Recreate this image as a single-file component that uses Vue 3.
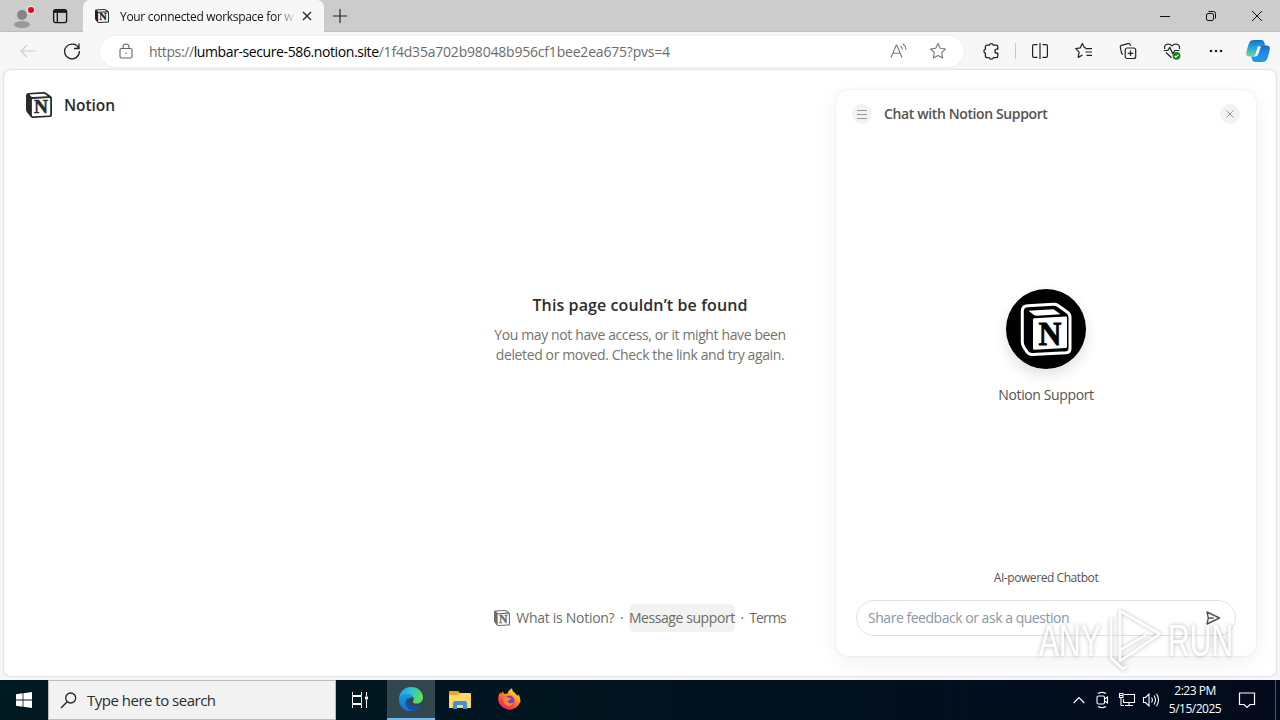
<template>
  <div class="desktop">
    <header class="tabstrip">
      <div class="avatar">
        <svg width="26" height="28" viewBox="0 0 26 28">
          <circle cx="13" cy="13" r="5" fill="#858585" />
          <ellipse cx="13" cy="22.500" rx="8" ry="3.600" fill="#999" />
          <circle cx="22" cy="8" r="4.500" fill="#dedede" />
          <circle cx="22" cy="8" r="3" fill="#e00b1c" />
        </svg>
      </div>
      <svg class="workspace" width="16" height="16" viewBox="0 0 16 16" fill="none" stroke="#111" stroke-width="1.300">
        <rect x="1.600" y="1.600" width="13" height="13" rx="2" />
        <path d="M1.800 3.500h12.600" stroke-width="2.600" />
        <path d="M5.300 4v10" />
      </svg>
      <div class="tab">
        <svg class="tab-icon" width="14" height="14" viewBox="0 0 26 26"><use href="#cube" /></svg>
        <span class="tab-title">Your connected workspace for w</span>
        <svg width="10" height="10" viewBox="0 0 10 10" stroke="#222" stroke-width="1.300"><path d="M1 1l8 8M9 1l-8 8" /></svg>
      </div>
      <svg class="plus" width="14" height="14" viewBox="0 0 14 14" stroke="#222" stroke-width="1.200"><path d="M7 0v14M0 7h14" /></svg>
      <div class="window-buttons">
        <svg width="12" height="12" viewBox="0 0 12 12" fill="none" stroke="#111"><path d="M1 6.500h10" /></svg>
        <svg width="12" height="12" viewBox="0 0 12 12" fill="none" stroke="#111"><rect x="1.500" y="3.500" width="7" height="7" rx="1.500" /><path d="M3.500 1.500h5q2 0 2 2v5" /></svg>
        <svg width="12" height="12" viewBox="0 0 12 12" fill="none" stroke="#111"><path d="M1 1l10 10M11 1L1 11" /></svg>
      </div>
    </header>

    <div class="toolbar">
      <svg class="back" width="16" height="14" viewBox="0 0 16 14" fill="none" stroke="#cfcfcf" stroke-width="1.200"><path d="M16 7H1M7 1L1 7l6 6" /></svg>
      <svg class="reload" width="18" height="18" viewBox="0 0 18 18" fill="none" stroke="#222" stroke-width="1.300"><path d="M15.800 6.500A7.400 7.400 0 1 0 16.400 9M16 1.500v5h-5" /></svg>
      <div class="address">
        <svg class="lock" width="14" height="16" viewBox="0 0 14 16" fill="none" stroke="#666" stroke-width="1.100">
          <rect x="1" y="5.500" width="12" height="9.500" rx="1.500" /><path d="M4 5.500V4a3 3 0 0 1 6 0v1.500" /><circle cx="7" cy="10.300" r=".8" fill="#666" stroke="none" />
        </svg>
        <span class="url"><span class="scheme">https://</span><b>lumbar-secure-586.notion.site</b><span class="path">/1f4d35a702b98048b956cf1bee2ea675?pvs=4</span></span>
        <svg class="read" width="18" height="18" viewBox="0 0 18 18" fill="none" stroke="#777" stroke-width="1.100"><path d="M1 15.500L6.300 3h.4L12 15.500M3 11.300h7M10.500 4q1.700 1.300 1.800 3.500M12.800 1.800q3 2.300 3.200 5.800" /></svg>
        <svg class="star" width="18" height="18" viewBox="0 0 18 18" fill="none" stroke="#777" stroke-width="1.100" stroke-linejoin="round"><path d="M9 1.500l2.300 4.800 5.200.7-3.800 3.700.9 5.200L9 13.400l-4.600 2.500.9-5.200L1.500 7l5.200-.7z" /></svg>
      </div>
      <div class="tool">
        <svg width="18" height="18" viewBox="0 0 18 18" fill="none" stroke="#222" stroke-width="1.300" stroke-linejoin="round"><path d="M5 3.200h2.200a2.200 2.200 0 0 1 4.200 0h2.800q1.600 0 1.600 1.600v2.400h-.9a2 2 0 0 0 0 4h.9v2.800q0 1.600-1.600 1.600h-2.800a2.200 2.200 0 0 1-4.200 0H5q-1.600 0-1.600-1.600v-2.800a2.100 2.100 0 0 1 0-4V4.800q0-1.600 1.600-1.600z" /></svg>
      </div>
      <i class="divider"></i>
      <div class="tool">
        <svg width="18" height="18" viewBox="0 0 18 18" fill="none" stroke="#222" stroke-width="1.200"><path d="M6.500 2.700H3q-1.400 0-1.400 1.400v9.800q0 1.400 1.400 1.400h3.500M11.500 2.700H15q1.400 0 1.400 1.400v9.800q0 1.400-1.400 1.400h-3.500M9 1v16" /></svg>
      </div>
      <div class="tool">
        <svg width="18" height="18" viewBox="0 0 18 18" fill="none" stroke="#222" stroke-width="1.200" stroke-linejoin="round"><path d="M11 5.800L9.300 5.600 7.300 1.500 5.200 5.900l-4.500.7 3.400 3.500-.9 5.300 4.400-2.400M10.500 6.700H17M10.500 10H17M11.500 13.300H17" /></svg>
      </div>
      <div class="tool">
        <svg width="18" height="18" viewBox="0 0 18 18" fill="none" stroke="#222" stroke-width="1.200" stroke-linejoin="round"><rect x="6.200" y="6" width="10.500" height="10.500" rx="2" /><path d="M11.500 8.500v5.500M8.700 11.300h5.500M3.800 12.500q-1-.5-1.400-2L1.300 5.300q-.3-1.600 1.200-2l6.600-1.700q1.700-.3 2.200 1.200l.5 1" /></svg>
      </div>
      <div class="tool">
        <svg width="18" height="18" viewBox="0 0 18 18" fill="none" stroke="#222" stroke-width="1.200" stroke-linejoin="round"><path d="M1.700 7Q.8 2.500 5 2q2.500 0 4 2 1.500-2 4-2 4.200.5 3.500 5M3 10.500l5.500 5.300M.8 8.500h4l2-3.200 3 6.500 2-3.300h4.700" /><circle cx="13.500" cy="13.800" r="3.900" fill="#16801d" stroke="none" /><path d="M11.700 14l1.300 1.200 2.400-2.600" stroke="#fff" /></svg>
      </div>
      <div class="tool">
        <svg width="16" height="4" viewBox="0 0 16 4" fill="#222"><circle cx="3" cy="2" r="1.300" /><circle cx="8" cy="2" r="1.300" /><circle cx="13" cy="2" r="1.300" /></svg>
      </div>
      <div class="copilot">
        <svg width="24" height="24" viewBox="0 0 24 24">
          <defs>
            <linearGradient id="cpA" x1="0" y1="0" x2="0" y2="1"><stop offset="0" stop-color="#1670ca" /><stop offset=".45" stop-color="#22a7dc" /><stop offset="1" stop-color="#73d78f" /></linearGradient>
            <linearGradient id="cpB" x1="0" y1="0" x2="0" y2="1"><stop offset="0" stop-color="#1767c9" /><stop offset=".4" stop-color="#2187e6" /><stop offset="1" stop-color="#1c9df0" /></linearGradient>
          </defs>
          <path d="M8 1h7.500q2 0 2.600 2l1.200 4H14q-1.900 0-2.500 2l-1.700 5.500q-.9 3-3.600 3H3.500Q-.3 17.500.3 13.800 1 9.500 3 4.300 4.200 1 8 1z" fill="url(#cpA)" />
          <path d="M16 23H9q-2.200 0-2.700-2l-1-3.500h2.500q2 0 2.700-2.300l2-6.200Q13.200 6.500 15.600 6.500h4.700q4 0 3.500 3.500-.7 4.800-2.500 9.500Q20 23 16 23z" fill="url(#cpB)" />
          <path d="M12.200 7.500h3.300q-.9.700-1.400 2.200l-1.700 5q-.8 2.300-2.300 2.800H8.300q1-.8 1.500-2.500l1.300-5q.4-1.800 1.100-2.500z" fill="#f7fbff" />
        </svg>
      </div>
    </div>

    <main class="page">
      <div class="brand">
        <svg width="26" height="26" viewBox="0 0 26 26">
          <g id="cube">
            <path class="ink" d="M2.200 1 17 .1q2-.1 3.500.9l4.300 3.100q1.200.9 1.200 2.300V23q0 1.900-1.900 2L7.500 26q-1.900.1-3-1.300L1 20.200Q0 19 0 17.500V3.200Q0 1.200 2.200 1z" />
            <path class="paper" d="M3.400 2.600 17 1.700q1.200-.1 2 .5l2.800 2L7 5.100q-1 .1-1.800-.5z" />
            <path class="paper" d="M6.900 6.900 23 6q1.200-.1 1.200 1v15.300q0 1-1 1.100L7 24.300q-1.100.1-1.100-1V8q0-1 1-1.100z" />
            <text class="ink letter" x="15" y="21.300" text-anchor="middle" textLength="14" lengthAdjust="spacingAndGlyphs">N</text>
          </g>
        </svg>
        <span>Notion</span>
      </div>
      <section class="missing">
        <h1>This page couldn’t be found</h1>
        <p>You may not have access, or it might have been</p>
        <p>deleted or moved. Check the link and try again.</p>
      </section>
      <footer class="links">
        <svg width="16" height="16" viewBox="0 0 26 26"><use href="#cube" /></svg>
        <span class="what">What is Notion?</span>
        <span class="dot">·</span>
        <span class="support">Message support</span>
        <span class="dot">·</span>
        <span class="terms">Terms</span>
      </footer>

      <aside class="chat">
        <div class="chat-head">
          <span class="round"><svg width="10" height="10" viewBox="0 0 10 10" stroke="#999"><path d="M0 1.500h10M0 5.500h10M0 9.500h10" /></svg></span>
          <strong>Chat with Notion Support</strong>
          <span class="round"><svg width="8" height="8" viewBox="0 0 8 8" stroke="#999"><path d="M.5.5l7 7M7.500.5l-7 7" /></svg></span>
        </div>
        <div class="chat-body">
          <div class="badge">
            <svg width="80" height="80" viewBox="0 0 80 80" fill="none">
              <path d="M22 16.800l25-1.600q3-.2 5 1.200l9.500 6.800q2.500 1.800 2.500 5V59.500q0 4-4 4.300l-33.500 1.700q-3.500.2-5.300-2.300l-3.200-4.700q-1.700-2.500-1.700-5.500V22q0-4.900 5.700-5.200z" stroke="#fff" stroke-width="3" />
              <path d="M22.500 21.800l25-1.500 7 5-23.500 1.400q-2 .1-3.400-.9z" fill="#fff" />
              <path d="M28.500 29.300l31-1.800q1.500 0 1.500 1.400v28.600q0 1.500-1.500 1.600l-31 1.700q-1.500 0-1.500-1.500V30.700q0-1.400 1.500-1.400z" fill="#fff" />
              <text class="badge-letter" x="44" y="55.500" text-anchor="middle" textLength="23" lengthAdjust="spacingAndGlyphs">N</text>
            </svg>
          </div>
          <span class="chat-name">Notion Support</span>
        </div>
        <span class="powered">AI-powered Chatbot</span>
        <div class="ask">
          <span>Share feedback or ask a question</span>
          <svg width="16" height="16" viewBox="0 0 16 16" fill="none" stroke="#555" stroke-width="1.400" stroke-linejoin="round"><path d="M2 2l12.500 6L2 14l1.300-6zM3.300 8h5.500" /></svg>
        </div>
      </aside>

      <div class="watermark">
        <span>ANY</span>
        <svg width="58" height="66" viewBox="0 0 58 66" fill="none" stroke="#fff" stroke-width="2.500" stroke-linejoin="round">
          <path d="M5 10v40l12 11 4-3M14 3v50l40-27zM14 14v28l26-15" />
        </svg>
        <span>RUN</span>
      </div>
    </main>

    <nav class="taskbar">
      <div class="start">
        <svg width="16" height="16" viewBox="0 0 16 16" fill="#fff"><path d="M0 2.300L6.600 1.300v6.300H0zM7.400 1.200L16 0v7.600H7.400zM0 8.400h6.600v6.300L0 13.700zM7.400 8.400H16V16l-8.600-1.200z" /></svg>
      </div>
      <div class="search">
        <svg width="17" height="17" viewBox="0 0 17 17" fill="none" stroke="#222" stroke-width="1.300"><circle cx="10.700" cy="6" r="5" /><path d="M7.200 9.700L1 16" /></svg>
        <span>Type here to search</span>
      </div>
      <div class="app task-view">
        <svg width="18" height="18" viewBox="0 0 18 18" fill="none" stroke="#fff"><path d="M1.500 1v3.500h9V1M1.500 17v-3.500h9V17M1.500 5.500h9v7h-9zM15.500 1v4M15.500 9v8" /><path d="M14 5.500h3v3h-3z" fill="#fff" stroke="none" /></svg>
      </div>
      <div class="app active">
        <svg width="24" height="24" viewBox="0 0 24 24">
          <defs>
            <linearGradient id="edA" x1="0" y1="0" x2="1" y2=".35"><stop offset="0" stop-color="#1b9de2" /><stop offset=".5" stop-color="#2bc3d2" /><stop offset="1" stop-color="#5fdd59" /></linearGradient>
            <linearGradient id="edB" x1="0" y1="0" x2="0" y2="1"><stop offset="0" stop-color="#1c9de0" /><stop offset="1" stop-color="#1270c8" /></linearGradient>
          </defs>
          <path d="M.1 11.500C.6 4.500 5.500 0 12 0c7.300 0 12 5 12 10.200 0 4-3 6.300-6.200 6.300-2.600 0-4-.9-4-1.800 0-.7 1-1.100 1-2.700 0-2.400-2.500-4.300-5.600-4.300-4 0-7.600 1.500-9.100 3.800z" fill="url(#edA)" />
          <path d="M.1 11.500C1 8.600 4 6.800 7.500 6.800c3.800 0 6.500 1.700 7.200 4.200-1-1.200-6-.8-6 4 0 4 4 8.500 9.800 7.500A12 12 0 0 1 .1 11.500z" fill="url(#edB)" />
          <path d="M9.500 10.800c-2.200 1.200-3.300 3.500-2.800 6 .6 3.600 4 7 8.300 6.800 3-.2 5.700-2.200 7.300-4.500.3-.5-.1-.8-.6-.6-6.500 2.800-13.200-1.500-12.200-7.700z" fill="#174f99" />
        </svg>
      </div>
      <div class="app">
        <svg width="22" height="20" viewBox="0 0 22 20"><path d="M0 1.500Q0 1 .8 1H9l2 2h10v4H0z" fill="#e8a520" /><path d="M0 5l9-.2L11 3h10q1 0 1 1v14H0z" fill="#ffd667" /><path d="M4 19v-6q0-2 2-2h10q2 0 2 2v6h-4v-4H8v4z" fill="#3a93d4" /><path d="M8 15h6v2.500H8z" fill="#ffd667" /></svg>
      </div>
      <div class="app">
        <svg width="24" height="24" viewBox="0 0 24 24">
          <defs>
            <linearGradient id="ffA" x1=".85" y1="0" x2=".2" y2="1"><stop offset="0" stop-color="#fff44f" /><stop offset=".4" stop-color="#ff9820" /><stop offset=".75" stop-color="#ff3b47" /><stop offset="1" stop-color="#e31587" /></linearGradient>
          </defs>
          <path d="M1 11q.4-4.500 2.300-7l.7 2L6 3.300 7 6q1.800-.7 3.500-.3Q11.500 2 15 .3q0 2.500 2.300 4.200Q19.500 6 20.500 8l.7-1.700Q24 10 23.300 14A11.500 11.500 0 0 1 1 11z" fill="url(#ffA)" />
          <circle cx="12.300" cy="12.700" r="5.200" fill="#7141d8" />
          <path d="M6 9.500q3-1.500 5.300.3l3 .5q-.8 1.700-3.200 2.200-1 1.500 1 2.500 2.200.8 4.500-1-1.200 4-5 4Q6 17.500 6 9.500z" fill="#ff8a25" />
        </svg>
      </div>
      <div class="tray">
        <svg width="12" height="8" viewBox="0 0 12 8" fill="none" stroke="#fff" stroke-width="1.200"><path d="M.7 7L6 1.500 11.300 7" /></svg>
        <svg width="14" height="18" viewBox="0 0 14 18" fill="none" stroke="#fff" stroke-width="1.100"><rect x="2" y="5" width="7.500" height="8" rx="1.500" /><path d="M9.500 8l3-2v6l-3-2M3 2.500q4-2.300 8 0M3 15.500q4 2.300 8 0" /></svg>
        <svg width="18" height="16" viewBox="0 0 18 16" fill="none" stroke="#fff" stroke-width="1.100"><path d="M6 2.500h10.500v8H5.500V7M11 10.500v3M7 13.500h8M3 6v7.500h3M1.500 1.500h3.500v4H1.500zM2 3.500h3" /></svg>
        <svg width="18" height="16" viewBox="0 0 18 16" fill="none" stroke="#fff" stroke-width="1.100"><path d="M1.500 5.500h2L7 2v12l-3.500-3.500h-2zM9.500 5.500q1.800 2.500 0 5M12 3.500q3 4.500 0 9M14.500 1.800q4 6.200 0 12.400" /></svg>
      </div>
      <div class="clock"><span>2:23 PM</span><span>5/15/2025</span></div>
      <svg class="notify" width="18" height="18" viewBox="0 0 18 18" fill="none" stroke="#fff" stroke-width="1.200"><path d="M1.500 2h15v11.500H12l-3 3-3-3H1.500z" /></svg>
      <i class="peek"></i>
    </nav>
  </div>
</template>

<script setup>
</script>

<style>
body {
  margin: 0;
  overflow: hidden;
}
</style>

<style scoped>
.desktop {
  width: 1280px;
  height: 720px;
  display: flex;
  flex-direction: column;
  overflow: hidden;
  background: #f6f6f6;
  font-family: "Open Sans", "Noto Sans", sans-serif;
  font-size: 14px;
  letter-spacing: -0.38px;
  white-space: nowrap;
}

.desktop svg {
  flex: none;
  display: block;
}

.ink {
  fill: currentColor;
}

.paper {
  fill: #fff;
}

.letter {
  font: bold 19px "Liberation Serif", serif;
  letter-spacing: 0;
  stroke: currentColor;
  stroke-width: 0.5px;
}

.tabstrip {
  height: 32px;
  flex: none;
  display: flex;
  align-items: center;
  background: #ccc;
  box-shadow: inset 0 -1px #bebebe;
}

.avatar {
  width: 44px;
  display: flex;
  justify-content: center;
}

.workspace {
  margin: 0 15px 0 8px;
}

.tab {
  box-sizing: border-box;
  width: 241px;
  height: 32px;
  padding: 0 11px 0 12px;
  display: flex;
  align-items: center;
  background: #f7f7f7;
  border-radius: 7px 7px 0 0;
}

.tab-title {
  width: 175px;
  margin: 0 7px 0 11px;
  font-size: 12px;
  letter-spacing: -0.31px;
  color: #111;
  mask-image: linear-gradient(90deg, #000 155px, transparent 176px);
}

.tab-icon {
  color: #222;
}

.plus {
  margin-left: 9px;
}

.window-buttons {
  margin-left: auto;
  margin-right: 17px;
  display: flex;
  gap: 34px;
}

.toolbar {
  height: 38px;
  flex: none;
  display: flex;
  align-items: center;
  background: #f7f7f7;
}

.back {
  margin-left: 20px;
}

.reload {
  margin: 0 19px 0 27px;
}

.address {
  box-sizing: border-box;
  width: 864px;
  height: 31px;
  padding: 0 17px 0 19px;
  display: flex;
  align-items: center;
  background: #fff;
  border-radius: 16px;
  box-shadow: 0 0 2px #ddd;
}

.url {
  margin-left: 16px;
  color: #6b6b6b;
}

.url b {
  font-weight: 400;
  color: #000;
  letter-spacing: -0.4px;
}

.path {
  letter-spacing: -0.2px;
}

.read {
  margin-left: auto;
  margin-right: 21px;
}

.tool {
  width: 44px;
  display: flex;
  justify-content: center;
}

.address + .tool {
  margin-left: 5px;
}

.divider {
  width: 1px;
  height: 16px;
  margin: 0 2px;
  background: #c8c8c8;
}

.copilot {
  width: 40px;
  display: flex;
  justify-content: center;
}

.page {
  position: relative;
  box-sizing: border-box;
  height: 606px;
  flex: none;
  margin: 0 4px 4px;
  padding-top: 22px;
  display: flex;
  flex-direction: column;
  background: #fff;
  border-radius: 7px;
  box-shadow: 0 0 2px #b5b5b5;
  overflow: hidden;
}

.brand {
  height: 26px;
  margin-left: 22px;
  display: flex;
  align-items: center;
  gap: 12px;
  color: #2b2b2b;
  font-size: 15.500px;
  font-weight: 600;
  letter-spacing: -0.05px;
}

.missing {
  margin-top: 175px;
  text-align: center;
}

.missing h1 {
  margin: 0 0 8px;
  font-size: 16px;
  line-height: 24px;
  font-weight: 600;
  letter-spacing: 0.1px;
  color: #2e2d2b;
}

.missing p {
  margin: 0;
  line-height: 20px;
  color: #75736f;
}

.links {
  height: 28px;
  line-height: 28px;
  margin-top: 239px;
  display: flex;
  align-items: center;
  justify-content: center;
  color: #6e6c68;
}

.what {
  margin-left: 6px;
  letter-spacing: -0.28px;
}

.dot {
  width: 14.500px;
  text-align: center;
}

.support {
  letter-spacing: -0.42px;
  background: #f2f2f0;
  border-radius: 6px;
}

.terms {
  letter-spacing: -0.9px;
}

.chat {
  position: absolute;
  left: 832px;
  top: 20px;
  box-sizing: border-box;
  width: 420px;
  height: 566px;
  padding: 14px 20px 20px;
  display: flex;
  flex-direction: column;
  align-items: center;
  background: #fff;
  border-radius: 12px;
  box-shadow: 0 0 2px rgba(0, 0, 0, 0.12), 0 6px 24px rgba(0, 0, 0, 0.06);
  color: #555350;
}

.chat-head {
  align-self: stretch;
  height: 20px;
  margin: 0 -4px;
  display: flex;
  align-items: center;
}

.chat-head strong {
  flex: 1;
  margin-left: 12px;
  padding-bottom: 1px;
  font-weight: 600;
}

.round {
  width: 20px;
  height: 20px;
  display: flex;
  align-items: center;
  justify-content: center;
  border-radius: 50%;
  background: #f2f2f2;
}

.chat-body {
  margin-top: 165px;
  display: flex;
  flex-direction: column;
  align-items: center;
  gap: 16px;
}

.badge {
  width: 80px;
  height: 80px;
  border-radius: 50%;
  background: #000;
  box-shadow: 0 6px 14px rgba(0, 0, 0, 0.12);
}

.badge-letter {
  font: bold 33px "Liberation Serif", serif;
  letter-spacing: 0;
  fill: #000;
  stroke: #000;
  stroke-width: 0.8px;
}

.chat-name {
  line-height: 20px;
}

.powered {
  margin-top: 164px;
  font-size: 12px;
  line-height: 18px;
  letter-spacing: -0.43px;
}

.ask {
  box-sizing: border-box;
  width: 380px;
  height: 36px;
  margin-top: auto;
  padding: 0 14px 0 11px;
  display: flex;
  align-items: center;
  justify-content: space-between;
  border: 1px solid #e1e1e1;
  border-radius: 18px;
  color: #8b97a3;
  letter-spacing: -0.47px;
}

.ask span {
  padding-bottom: 2px;
}

.watermark {
  position: absolute;
  left: 1035px;
  top: 538px;
  display: flex;
  align-items: center;
  color: #fff;
  filter: drop-shadow(0 0 2px rgba(0, 0, 0, 0.34));
  opacity: 0.85;
  font: 45px/66px "Liberation Sans", sans-serif;
  letter-spacing: 0;
}

.watermark span {
  width: 66px;
  transform-origin: left;
  transform: scaleX(0.67);
}

.watermark svg {
  margin-left: 1px;
  margin-right: 4px;
}

.taskbar {
  height: 40px;
  flex: none;
  display: flex;
  align-items: center;
  background: linear-gradient(90deg, #001a22, #00131e 50%, #030a1c);
  color: #fff;
}

.start {
  width: 48px;
  display: flex;
  justify-content: center;
}

.search {
  box-sizing: border-box;
  width: 288px;
  height: 40px;
  padding-left: 11px;
  display: flex;
  align-items: center;
  gap: 10px;
  background: #f2f2f2;
  border: 1px solid #bcbcbc;
  color: #2c2c2c;
  font-size: 15px;
  letter-spacing: -0.5px;
}

.app {
  box-sizing: border-box;
  width: 49px;
  height: 40px;
  display: flex;
  align-items: center;
  justify-content: center;
}

.app.task-view {
  width: 51px;
  padding-right: 3px;
}

.app.active {
  width: 48px;
  background: #33474f;
  border-bottom: 2px solid #76b9ed;
}

.tray {
  margin-left: auto;
  display: flex;
  align-items: center;
  gap: 10px;
}

.tray svg:nth-child(2) {
  margin-right: -1px;
}

.tray svg:nth-child(4) {
  margin-left: -4px;
}

.clock {
  width: 70px;
  display: flex;
  flex-direction: column;
  align-items: center;
  font-size: 12px;
  line-height: 18px;
  letter-spacing: -0.5px;
}

.notify {
  margin-left: 8px;
}

.peek {
  width: 1px;
  height: 40px;
  margin: 0 4px 0 19px;
  background: #4d5664;
}
</style>
